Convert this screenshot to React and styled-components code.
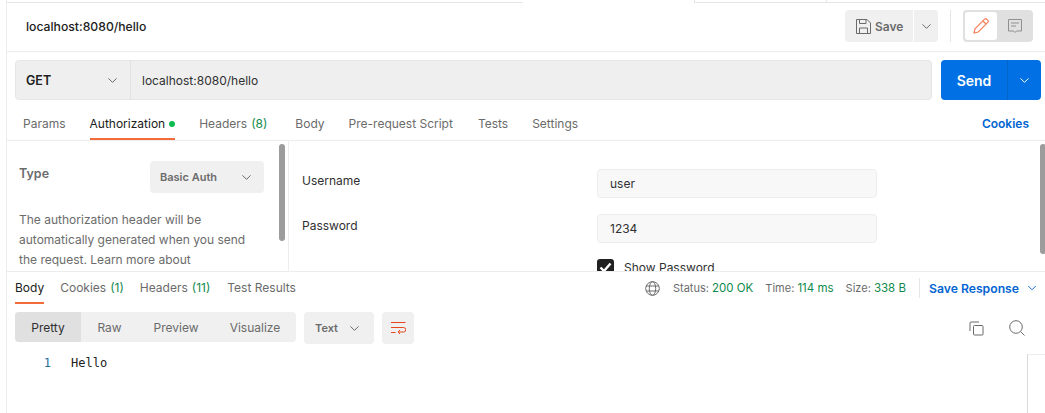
import styled, { createGlobalStyle } from "styled-components";
import { ChevronDown } from "lucide-react";

const GlobalStyle = createGlobalStyle`
  html, body {
    margin: 0;
    padding: 0;
    background: #fff;
  }
  body {
    font-family: Inter, "Liberation Sans", sans-serif;
    font-size: 12px;
    color: #212121;
  }
  * {
    box-sizing: border-box;
  }
`;

const Page = styled.div`
  width: 1045px;
  height: 413px;
  overflow: hidden;
  display: flex;
  flex-direction: column;
  padding-left: 6px;
`;

const Frame = styled.div`
  flex: 1;
  min-height: 0;
  display: flex;
  flex-direction: column;
  border-left: 1px solid #ededed;
`;

const TabStrip = styled.div`
  height: 3px;
  flex: none;
  display: flex;
`;

const StripCell = styled.div`
  height: 3px;
  width: ${(p) => p.$width}px;
  border-bottom: ${(p) => (p.$active ? "none" : "1px solid #e6e6e6")};
  border-right: ${(p) => (p.$tick ? "1px solid #e6e6e6" : "none")};
  ${(p) => p.$grow && "flex: 1;"}
`;

const Header = styled.div`
  height: 49px;
  flex: none;
  display: flex;
  align-items: center;
  padding: 0 12px 0 19px;
  border-bottom: 1px solid #ededed;
`;

const RequestName = styled.div`
  flex: 1;
  font-weight: 500;
  font-size: 12.2px;
  color: #212121;
  position: relative;
  top: -1px;
`;

const SaveButton = styled.div`
  width: 68px;
  height: 32px;
  margin-top: -2px;
  display: flex;
  align-items: center;
  gap: 4px;
  padding-left: 11px;
  background: #f0f0f0;
  border-radius: 4px 0 0 4px;
  font-weight: 600;
  font-size: 12px;
  color: #6b6b6b;
`;

const SaveArrow = styled.div`
  width: 24px;
  height: 32px;
  margin: -2px 0 0 1px;
  display: flex;
  align-items: center;
  justify-content: center;
  background: #f0f0f0;
  border-radius: 0 4px 4px 0;
  color: #6b6b6b;
`;

const HeaderDivider = styled.div`
  width: 1px;
  height: 32px;
  margin: -2px 12px 0 12px;
  background: #e6e6e6;
`;

const ModeSwitch = styled.div`
  width: 70px;
  height: 32px;
  margin-top: -2px;
  display: flex;
  align-items: center;
  padding: 2px;
  background: #e0e0e0;
  border-radius: 4px;
`;

const ModeButton = styled.div`
  width: 32px;
  height: 28px;
  display: flex;
  align-items: center;
  justify-content: center;
  border-radius: 3px;
  background: ${(p) => (p.$active ? "#fff" : "transparent")};
  & + & {
    margin-left: 2px;
  }
`;

const UrlRow = styled.div`
  flex: none;
  display: flex;
  gap: 9px;
  padding: 8px 4px 0 8px;
`;

const UrlBox = styled.div`
  flex: 1;
  height: 40px;
  display: flex;
  background: #efefef;
  border: 1px solid #e6e6e6;
  border-radius: 4px;
`;

const MethodSelect = styled.div`
  width: 115px;
  flex: none;
  display: flex;
  align-items: center;
  justify-content: space-between;
  padding: 0 10px 0 10px;
  border-right: 1px solid #e3e3e3;
  font-weight: 600;
  font-size: 12.5px;
  color: #212121;
`;

const UrlText = styled.div`
  display: flex;
  align-items: center;
  padding-left: 11px;
  color: #303030;
  font-size: 12px;
`;

const SendGroup = styled.div`
  width: 100px;
  height: 40px;
  display: flex;
  background: #0070e4;
  border-radius: 4px;
  color: #fff;
`;

const SendLabel = styled.div`
  width: 67px;
  display: flex;
  align-items: center;
  justify-content: center;
  font-weight: 600;
  font-size: 14px;
  border-right: 1px solid #0064cc;
`;

const SendArrow = styled.div`
  flex: 1;
  display: flex;
  align-items: center;
  justify-content: center;
`;

const RequestTabs = styled.div`
  height: 41px;
  flex: none;
  display: flex;
  align-items: stretch;
  padding: 0 4px 0 16px;
  border-bottom: 1px solid #ededed;
`;

const Tab = styled.div`
  display: flex;
  align-items: center;
  gap: 4px;
  padding-top: 9px;
  margin-right: ${(p) => p.$gap}px;
  white-space: nowrap;
  color: ${(p) => (p.$active ? "#212121" : "#6b6b6b")};
  border-bottom: 2px solid ${(p) => (p.$active ? "#f26b3a" : "transparent")};
`;

const Count = styled.span`
  color: #0f8a4c;
`;

const Dot = styled.span`
  width: 6px;
  height: 6px;
  border-radius: 50%;
  background: #0cbb52;
`;

const CookiesLink = styled.div`
  margin-left: auto;
  margin-right: 12px;
  padding-top: 7px;
  display: flex;
  align-items: center;
  font-weight: 600;
  font-size: 12px;
  color: #0265d2;
`;

const AuthArea = styled.div`
  height: 131px;
  flex: none;
  position: relative;
  display: flex;
  overflow: hidden;
  border-bottom: 1px solid #ededed;
`;

const AuthSide = styled.div`
  width: 282px;
  flex: none;
  padding: 20px 24px 0 12px;
  border-right: 1px solid #ededed;
`;

const TypeRow = styled.div`
  display: flex;
  justify-content: space-between;
  align-items: flex-start;
`;

const TypeLabel = styled.div`
  font-weight: 600;
  font-size: 12.5px;
  color: #6b6b6b;
  margin-top: 5px;
`;

const TypeSelect = styled.div`
  width: 114px;
  height: 32px;
  display: flex;
  align-items: center;
  justify-content: space-between;
  padding: 0 10px;
  background: #f0f0f0;
  border-radius: 4px;
  font-weight: 600;
  font-size: 11px;
  color: #6b6b6b;
`;

const AuthHelp = styled.p`
  margin: 17px 0 0;
  width: 240px;
  line-height: 20px;
  color: #6b6b6b;
`;

const Scrollbar = styled.div`
  position: absolute;
  top: 3px;
  left: ${(p) => p.$left}px;
  width: 6px;
  height: ${(p) => p.$height}px;
  background: #9c9c9c;
  border-radius: 3px;
`;

const AuthForm = styled.div`
  flex: 1;
  padding: 28px 0 0 13px;
  display: flex;
  flex-direction: column;
  gap: 16px;
`;

const FormRow = styled.div`
  display: flex;
  align-items: center;
`;

const FormLabel = styled.div`
  width: 295px;
  flex: none;
  color: #303030;
  margin-top: -7px;
`;

const FormInput = styled.div`
  width: 280px;
  height: 29px;
  display: flex;
  align-items: center;
  padding-left: 12px;
  background: #f8f8f8;
  border: 1px solid #ededed;
  border-radius: 4px;
  color: #303030;
`;

const CheckRow = styled.div`
  display: flex;
  align-items: center;
  gap: 10px;
  margin: 0 0 0 295px;
  color: #303030;
`;

const CheckBox = styled.div`
  width: 17px;
  height: 17px;
  display: flex;
  align-items: center;
  justify-content: center;
  background: #212121;
  border-radius: 3px;
`;

const ResponseBar = styled.div`
  height: 32px;
  flex: none;
  display: flex;
  align-items: stretch;
  padding: 0 6px 0 8px;
`;

const ResponseTab = styled(Tab)`
  padding-top: 1px;
  gap: 4px;
`;

const Stats = styled.div`
  margin-left: auto;
  display: flex;
  align-items: center;
  color: #6b6b6b;
  font-size: 11px;
`;

const Stat = styled.span`
  margin-left: ${(p) => p.$gap}px;
  white-space: nowrap;
`;

const StatValue = styled.span`
  color: #0f8a4c;
  font-size: 11.5px;
`;

const StatsDivider = styled.div`
  width: 1px;
  height: 20px;
  margin: 0 9px 0 13px;
  background: #e6e6e6;
`;

const SaveResponse = styled.div`
  display: flex;
  align-items: center;
  gap: 6px;
  font-weight: 600;
  font-size: 12.2px;
  color: #0265d2;
`;

const ViewRow = styled.div`
  flex: none;
  display: flex;
  align-items: flex-start;
  padding: 8px 16px 0 8px;
`;

const Segments = styled.div`
  width: 281px;
  height: 30px;
  display: flex;
  background: #f0f0f0;
  border-radius: 4px;
  overflow: hidden;
`;

const Segment = styled.div`
  width: ${(p) => p.$width}px;
  display: flex;
  align-items: center;
  justify-content: center;
  background: ${(p) => (p.$active ? "#e0e0e0" : "transparent")};
  color: ${(p) => (p.$active ? "#303030" : "#6b6b6b")};
`;

const FormatSelect = styled.div`
  width: 70px;
  height: 32px;
  margin-left: 8px;
  display: flex;
  align-items: center;
  justify-content: space-between;
  padding: 0 12px 0 11px;
  background: #f0f0f0;
  border-radius: 4px;
  font-weight: 600;
  font-size: 11px;
  color: #6b6b6b;
`;

const WrapButton = styled.div`
  width: 32px;
  height: 32px;
  margin-left: 8px;
  display: flex;
  align-items: center;
  justify-content: center;
  background: #f0f0f0;
  border-radius: 4px;
`;

const ViewActions = styled.div`
  margin-left: auto;
  height: 32px;
  display: flex;
  align-items: center;
  gap: 25px;
  padding-right: 4px;
`;

const CodeArea = styled.div`
  flex: 1;
  min-height: 0;
  display: flex;
  padding-top: 10px;
`;

const LineNumber = styled.div`
  width: 44px;
  flex: none;
  text-align: right;
  font-family: "DejaVu Sans Mono", monospace;
  font-size: 12px;
  line-height: 18px;
  color: #1f6f9a;
`;

const CodeText = styled.div`
  flex: 1;
  padding-left: 20px;
  font-family: "DejaVu Sans Mono", monospace;
  font-size: 12px;
  line-height: 18px;
  color: #212121;
`;

const Minimap = styled.div`
  width: 18px;
  flex: none;
  border-left: 1px solid #d9d9d9;
  border-top: 1px solid #ededed;
`;

function SaveIcon() {
  return (
    <svg width="15" height="15" viewBox="0 0 15 15" fill="none" stroke="#6b6b6b" strokeWidth="1">
      <path d="M.5.5h10.5l3.5 3.5v10.5H.5z" />
      <path d="M3.5.5v4h6.5v-4M3.5 14.5V9h8v5.5" />
    </svg>
  );
}

function PencilIcon() {
  return (
    <svg width="16" height="16" viewBox="0 0 16 16" fill="none" stroke="#f4805a" strokeWidth="1.2">
      <path d="M1 15l1-4.2L11.6 1.2a1.5 1.5 0 0 1 2.1 0l1.1 1.1a1.5 1.5 0 0 1 0 2.1L5.2 14z" />
      <path d="M10 3l3 3" />
    </svg>
  );
}

function CommentIcon() {
  return (
    <svg width="14" height="15" viewBox="0 0 14 15" fill="none" stroke="#8f8f8f" strokeWidth="1">
      <path d="M.5.5h13v11.5H8.5L7 13.5 5.5 12h-5z" />
      <path d="M3 4h8M3 7h5" />
    </svg>
  );
}

function WrapIcon() {
  return (
    <svg width="15" height="12" viewBox="0 0 15 12" fill="none" stroke="#e8461e" strokeWidth="1">
      <path d="M0 .5h14.5M0 5.5h12.5a2.2 2.2 0 0 1 0 4.5H7" />
      <path d="M9 8l-2 2 2 2M0 10.5h4.5" />
    </svg>
  );
}

function GlobeIcon() {
  return (
    <svg width="15" height="15" viewBox="0 0 15 15" fill="none" stroke="#6b6b6b" strokeWidth="1">
      <circle cx="7.5" cy="7.5" r="6.8" />
      <ellipse cx="7.5" cy="7.5" rx="3.2" ry="6.8" />
      <path d="M1.2 5h12.6M1.2 10h12.6" />
    </svg>
  );
}

function CopyIcon() {
  return (
    <svg width="15" height="15" viewBox="0 0 15 15" fill="none" stroke="#6b6b6b" strokeWidth="1">
      <rect x="4.5" y="4.5" width="9.5" height="9.5" rx="1" />
      <path d="M1 10V2a1 1 0 0 1 1-1h8" />
    </svg>
  );
}

function SearchIcon() {
  return (
    <svg width="16" height="16" viewBox="0 0 16 16" fill="none" stroke="#6b6b6b" strokeWidth="1">
      <circle cx="7" cy="7" r="6.3" />
      <path d="M11.6 11.6l3.9 3.9" />
    </svg>
  );
}

function CheckIcon() {
  return (
    <svg width="13" height="11" viewBox="0 0 13 11" fill="none" stroke="#fff" strokeWidth="2.4">
      <path d="M1.5 5.5l3.5 3.5 6.5-7.5" />
    </svg>
  );
}

const Arrow = ({ size = 15, color = "#6b6b6b" }) => (
  <ChevronDown size={size} color={color} strokeWidth={1.6} />
);

export default function App() {
  return (
    <Page>
      <GlobalStyle />
      <Frame>
        <TabStrip>
          <StripCell $width={516} />
          <StripCell $width={172} $active $tick />
          <StripCell $width={132} $tick />
          <StripCell $grow />
        </TabStrip>
        <Header>
          <RequestName>localhost:8080/hello</RequestName>
          <SaveButton>
            <SaveIcon />
            Save
          </SaveButton>
          <SaveArrow>
            <Arrow />
          </SaveArrow>
          <HeaderDivider />
          <ModeSwitch>
            <ModeButton $active>
              <PencilIcon />
            </ModeButton>
            <ModeButton>
              <CommentIcon />
            </ModeButton>
          </ModeSwitch>
        </Header>
        <UrlRow>
          <UrlBox>
            <MethodSelect>
              GET
              <Arrow />
            </MethodSelect>
            <UrlText>localhost:8080/hello</UrlText>
          </UrlBox>
          <SendGroup>
            <SendLabel>Send</SendLabel>
            <SendArrow>
              <Arrow color="#fff" />
            </SendArrow>
          </SendGroup>
        </UrlRow>
        <RequestTabs>
          <Tab $gap={24}>Params</Tab>
          <Tab $active $gap={24}>
            Authorization
            <Dot />
          </Tab>
          <Tab $gap={28}>
            Headers <Count>(8)</Count>
          </Tab>
          <Tab $gap={24}>Body</Tab>
          <Tab $gap={25}>Pre-request Script</Tab>
          <Tab $gap={24}>Tests</Tab>
          <Tab $gap={0}>Settings</Tab>
          <CookiesLink>Cookies</CookiesLink>
        </RequestTabs>
        <AuthArea>
          <AuthSide>
            <TypeRow>
              <TypeLabel>Type</TypeLabel>
              <TypeSelect>
                Basic Auth
                <Arrow />
              </TypeSelect>
            </TypeRow>
            <AuthHelp>
              The authorization header will be automatically generated when you
              send the request. Learn more about
            </AuthHelp>
          </AuthSide>
          <Scrollbar $left={272} $height={97} />
          <AuthForm>
            <FormRow>
              <FormLabel>Username</FormLabel>
              <FormInput>user</FormInput>
            </FormRow>
            <FormRow>
              <FormLabel>Password</FormLabel>
              <FormInput>1234</FormInput>
            </FormRow>
            <CheckRow>
              <CheckBox>
                <CheckIcon />
              </CheckBox>
              Show Password
            </CheckRow>
          </AuthForm>
          <Scrollbar $left={1033} $height={110} />
        </AuthArea>
        <ResponseBar>
          <ResponseTab $active $gap={16}>
            Body
          </ResponseTab>
          <ResponseTab $gap={16}>
            Cookies <Count>(1)</Count>
          </ResponseTab>
          <ResponseTab $gap={17}>
            Headers <Count>(11)</Count>
          </ResponseTab>
          <ResponseTab $gap={0}>Test Results</ResponseTab>
          <Stats>
            <GlobeIcon />
            <Stat $gap={13}>
              Status: <StatValue>200 OK</StatValue>
            </Stat>
            <Stat $gap={12}>
              Time: <StatValue>114 ms</StatValue>
            </Stat>
            <Stat $gap={12}>
              Size: <StatValue>338 B</StatValue>
            </Stat>
            <StatsDivider />
            <SaveResponse>
              Save Response
              <Arrow size={14} color="#0265d2" />
            </SaveResponse>
          </Stats>
        </ResponseBar>
        <ViewRow>
          <Segments>
            <Segment $active $width={66}>
              Pretty
            </Segment>
            <Segment $width={57}>Raw</Segment>
            <Segment $width={76}>Preview</Segment>
            <Segment $width={82}>Visualize</Segment>
          </Segments>
          <FormatSelect>
            Text
            <Arrow />
          </FormatSelect>
          <WrapButton>
            <WrapIcon />
          </WrapButton>
          <ViewActions>
            <CopyIcon />
            <SearchIcon />
          </ViewActions>
        </ViewRow>
        <CodeArea>
          <LineNumber>1</LineNumber>
          <CodeText>Hello</CodeText>
          <Minimap />
        </CodeArea>
      </Frame>
    </Page>
  );
}
